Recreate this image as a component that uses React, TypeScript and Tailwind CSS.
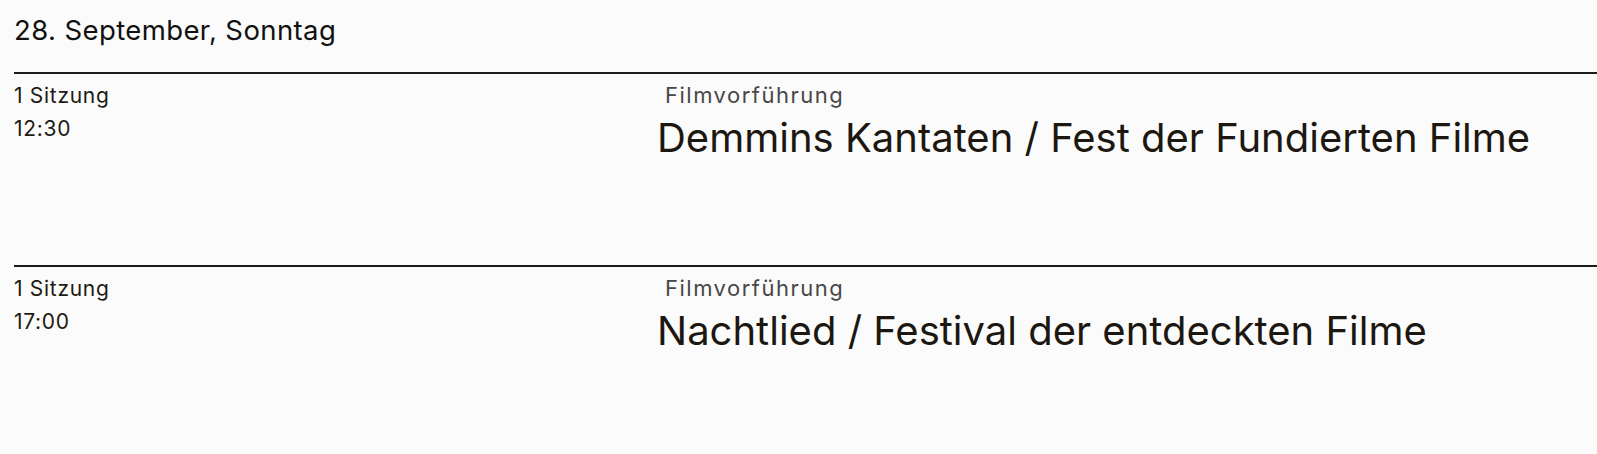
import React from 'react';

interface Screening {
    count: string;
    time: string;
    kind: string;
    title: string;
}

const screenings: Screening[] = [
    {
        count: '1 Sitzung',
        time: '12:30',
        kind: 'Filmvorführung',
        title: 'Demmins Kantaten / Fest der Fundierten Filme',
    },
    {
        count: '1 Sitzung',
        time: '17:00',
        kind: 'Filmvorführung',
        title: 'Nachtlied / Festival der entdeckten Filme',
    },
];

const ScreeningRow: React.FC<{ item: Screening }> = ({ item }) => (
    <div className="border-t-2 border-[#1c1c1c] h-[193px] pt-[5px] grid grid-cols-[643px_1fr]">
        {/* Left: session info */}
        <div className="text-[21px] leading-[33px] tracking-[0.7px] text-[#1e1a13]">
            <p>{item.count}</p>
            <p>{item.time}</p>
        </div>

        {/* Right: type + title */}
        <div>
            <p className="ml-[8px] text-[22px] leading-[33px] tracking-[1.5px] text-[#474747]">
                {item.kind}
            </p>
            <h2 className="text-[40px] leading-[52px] tracking-[0px] text-[#1c1711] whitespace-nowrap">
                {item.title}
            </h2>
        </div>
    </div>
);

const App: React.FC = () => {
    return (
        <div className="min-h-screen w-full bg-[#fbfbfb] pl-[14px] font-['Inter','Liberation_Sans',sans-serif]">
            {/* Day header */}
            <h1 className="pt-4 mb-7 text-[27.5px] leading-[28px] tracking-[0.4px] text-[#111111]">
                28. September, Sonntag
            </h1>

            {screenings.map((s) => (
                <ScreeningRow key={s.time} item={s} />
            ))}
        </div>
    );
};

export default App;
